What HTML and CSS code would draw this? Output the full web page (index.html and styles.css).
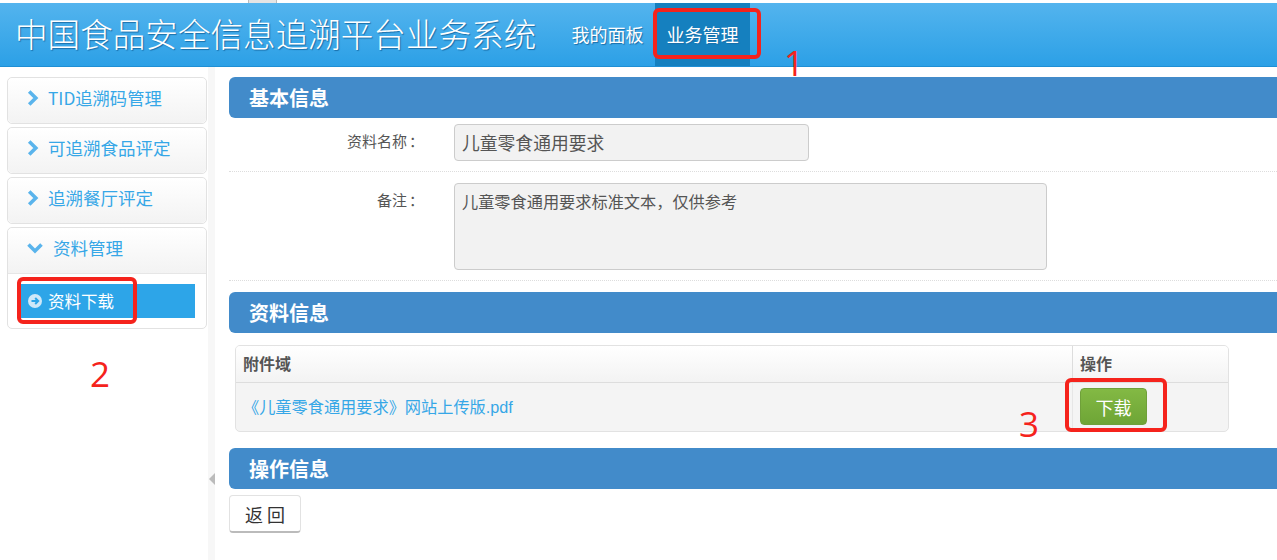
FILE: index.html
```html
<!DOCTYPE html>
<html lang="zh-CN">
<head>
<meta charset="utf-8">
<title>中国食品安全信息追溯平台业务系统</title>
<link rel="stylesheet" href="styles.css">
</head>
<body>
<div class="topstrip"><span class="topstrip-tab"></span></div>
<header class="header">
  <h1 class="title">中国食品安全信息追溯平台业务系统</h1>
  <nav class="nav">
    <a class="nav-item">我的面板</a>
    <a class="nav-item active">业务管理</a>
  </nav>
</header>
<div class="main">
  <aside class="sidebar">
    <div class="card"><div class="card-head"><svg class="chev" viewBox="0 0 12 16"><path d="M2.2 1.5 8.8 8 2.2 14.5" /></svg><span class="tid">TID追溯码管理</span></div></div>
    <div class="card"><div class="card-head"><svg class="chev" viewBox="0 0 12 16"><path d="M2.2 1.5 8.8 8 2.2 14.5" /></svg><span>可追溯食品评定</span></div></div>
    <div class="card"><div class="card-head"><svg class="chev" viewBox="0 0 12 16"><path d="M2.2 1.5 8.8 8 2.2 14.5" /></svg><span>追溯餐厅评定</span></div></div>
    <div class="card">
      <div class="card-head open"><svg class="chev down" viewBox="0 0 16 12"><path d="M1.5 2.5 8 9 14.5 2.5" /></svg><span>资料管理</span></div>
      <div class="card-body">
        <a class="sub-item"><svg class="circle" viewBox="0 0 14 14"><circle cx="7" cy="7" r="7"/><path d="M3.5 7H10M7.2 4 10.2 7 7.2 10"/></svg>资料下载</a>
      </div>
    </div>
  </aside>
  <div class="splitter"><span class="arrow"></span></div>
  <main class="content">
    <h2 class="section">基本信息</h2>
    <div class="row row-name">
      <label class="label">资料名称<span class="colon">&#65306;</span></label>
      <div class="input">儿童零食通用要求</div>
    </div>
    <div class="row row-note">
      <label class="label">备注<span class="colon">&#65306;</span></label>
      <div class="textarea">儿童零食通用要求标准文本&#65292;仅供参考</div>
    </div>
    <h2 class="section section-2">资料信息</h2>
    <div class="table">
      <div class="thead">
        <div class="cell col-a">附件域</div>
        <div class="cell col-b">操作</div>
      </div>
      <div class="tbody">
        <div class="cell col-a"><a class="link">《儿童零食通用要求》网站上传版.pdf</a></div>
        <div class="cell col-b"><button class="btn-green">下载</button></div>
      </div>
    </div>
    <h2 class="section section-3">操作信息</h2>
    <button class="btn-back">返 回</button>
  </main>
</div>
<div class="mark mark-1"></div>
<div class="mark mark-2"></div>
<div class="mark mark-3"></div>
<span class="num num-1">1</span>
<span class="num num-2">2</span>
<span class="num num-3">3</span>
</body>
</html>
```
FILE: styles.css
```css
* { box-sizing: border-box; }
html, body { margin: 0; height: 100%; }
body {
  position: relative;
  width: 1277px;
  height: 560px;
  overflow: hidden;
  background: #fff;
  font-family: "Noto Sans CJK SC", "Liberation Sans", sans-serif;
  color: #555;
}
.topstrip { height: 3px; position: relative; background: #fff; }
.topstrip-tab {
  display: block;
  margin-left: 248px;
  width: 29px;
  height: 3px;
  background: #e4e4e4;
  border-left: 1px solid #bbb;
  border-right: 1px solid #bbb;
}
.header {
  height: 64px;
  display: flex;
  align-items: stretch;
  background: linear-gradient(#53b4ee, #2ca0e6);
  border-bottom: 1px solid #1f8fd4;
}
.title {
  margin: 0 0 0 15px;
  width: 545px;
  flex: none;
  font-size: 32.6px;
  font-weight: 300;
  line-height: 60px;
  color: #fff;
  text-shadow: 1px 1px 1px #1a6ea8;
  white-space: nowrap;
}
.nav { display: flex; }
.nav-item {
  width: 95px;
  font-size: 18px;
  line-height: 62px;
  text-align: center;
  color: #fff;
  text-shadow: 1px 1px 1px #1a6ea8;
  white-space: nowrap;
}
.nav-item.active { background: #1580bf; height: 63px; }
.main { display: flex; height: 493px; }
.sidebar {
  width: 208px;
  padding: 10px 0 0 7px;
  display: flex;
  flex-direction: column;
  gap: 3px;
  flex: none;
}
.card {
  width: 200px;
  border: 1px solid #e2e2e2;
  border-radius: 5px;
  background: #fff;
}
.card-head {
  height: 45px;
  display: flex;
  align-items: center;
  padding-left: 19px;
  gap: 9px;
  font-size: 17.5px;
  color: #36a7e7;
  background: linear-gradient(#fff, #f3f3f3);
  border-radius: 5px;
}
.card-head span { position: relative; top: -3px; }
.card-head.open { border-radius: 5px 5px 0 0; padding-left: 19px; border-bottom: 1px solid #e6e6e6; height: 46px; }
.card-head .tid { font-size: 17.3px; }
.chev { width: 12px; height: 16px; fill: none; stroke: #5ab4ec; stroke-width: 3.6; position: relative; top: -3px; flex: none; }
.chev.down { width: 16px; height: 12px; margin-right: 1px; }
.card-body { padding: 10px 11px 10px 10px; }
.sub-item {
  display: flex;
  align-items: center;
  height: 34px;
  width: 177px;
  padding-left: 10px;
  gap: 6px;
  background: #2da5e8;
  color: #fff;
  font-size: 16.5px;
}
.circle { width: 14px; height: 14px; }
.circle circle { fill: #cfe8f8; }
.circle path { fill: none; stroke: #2da5e8; stroke-width: 2; }
.splitter {
  width: 7px;
  flex: none;
  background: #f7f7f7;
  position: relative;
  display: flex;
  align-items: center;
}
.arrow {
  width: 0;
  height: 0;
  margin: 0 0 0 1px;
  position: relative;
  top: 165px;
  border-style: solid;
  border-width: 6px 6px 6px 0;
  border-color: transparent #bbb transparent transparent;
}
.content { flex: 1; padding: 10px 0 0 14px; min-width: 0; }
.section {
  margin: 0;
  height: 41px;
  line-height: 42px;
  padding-left: 20px;
  font-size: 20px;
  font-weight: 700;
  color: #fff;
  background: #428bca;
  border-radius: 6px 0 0 6px;
}
.section-2 { margin-top: 11px; }
.section-3 { margin-top: 16px; }
.row {
  display: flex;
  border-bottom: 1px dotted #ddd;
  align-items: flex-start;
}
.row-name { height: 54px; padding-top: 6px; }
.row-note { height: 109px; padding-top: 11px; }
.label {
  width: 195px;
  flex: none;
  text-align: right;
  font-size: 15px;
  color: #555;
  line-height: 34px;
  white-space: nowrap;
}
.colon { font-family: "Noto Sans CJK TC", sans-serif; margin-left: 2px; }
.input, .textarea {
  margin-left: 30px;
  border: 1px solid #ccc;
  border-radius: 4px;
  background: #f2f2f2;
  color: #555;
  padding-left: 7px;
}
.input { width: 355px; height: 37px; line-height: 35px; font-size: 17.8px; }
.textarea { width: 593px; height: 87px; line-height: 34px; font-size: 16.2px; }
.table {
  margin: 12px 48px 0 6px;
  width: 994px;
  height: 87px;
  border: 1px solid #e2e2e2;
  border-radius: 5px;
  background: #f4f4f4;
  overflow: hidden;
}
.thead {
  display: flex;
  height: 37px;
  background: linear-gradient(#fff, #f3f3f3);
  border-bottom: 1px solid #ddd;
  font-size: 16px;
  font-weight: 700;
  line-height: 34px;
  color: #555;
}
.tbody { display: flex; height: 48px; align-items: stretch; }
.cell { padding-left: 7px; }
.col-a { width: 836px; flex: none; }
.col-b { flex: 1; }
.thead .col-b { border-left: 1px solid #ddd; padding-left: 7px; }
.tbody .col-b { border-left: 1px solid #e6e6e6; padding-left: 7px; }
.tbody .col-a { padding-left: 7px; }
.link { color: #36a7e7; font-size: 16.2px; line-height: 48px; font-family: "Liberation Sans", "Noto Sans CJK SC", sans-serif; white-space: nowrap; }
.btn-green {
  margin-top: 5px;
  display: block;
  width: 67px;
  height: 37px;
  border: 1px solid #6fa03a;
  border-radius: 4px;
  background: linear-gradient(#83b944, #6ea536);
  color: #fff;
  font-size: 18px;
  font-family: inherit;
  padding: 0;
}
.btn-back {
  margin-top: 6px;
  display: block;
  width: 72px;
  height: 38px;
  border: 1px solid #e2e2e2;
  border-bottom: 2px solid #bbb;
  border-radius: 4px;
  background: #fff;
  color: #333;
  font-size: 18px;
  font-family: inherit;
  padding: 0;
}
.mark {
  position: absolute;
  border: 4px solid #f5231c;
  border-radius: 6px;
}
.mark-1 { left: 653px; top: 8px; width: 108px; height: 51px; }
.mark-2 { left: 17px; top: 277px; width: 120px; height: 47px; }
.mark-3 { left: 1065px; top: 378px; width: 102px; height: 54px; }
.num {
  position: absolute;
  color: #f5231c;
  font-family: "Open Sans", sans-serif;
  font-weight: 400;
  font-size: 35px;
  line-height: 40px;
}
.num-1 { left: 784px; top: 43px; }
.num-2 { left: 90px; top: 354px; }
.num-3 { left: 1019px; top: 404px; }
```
